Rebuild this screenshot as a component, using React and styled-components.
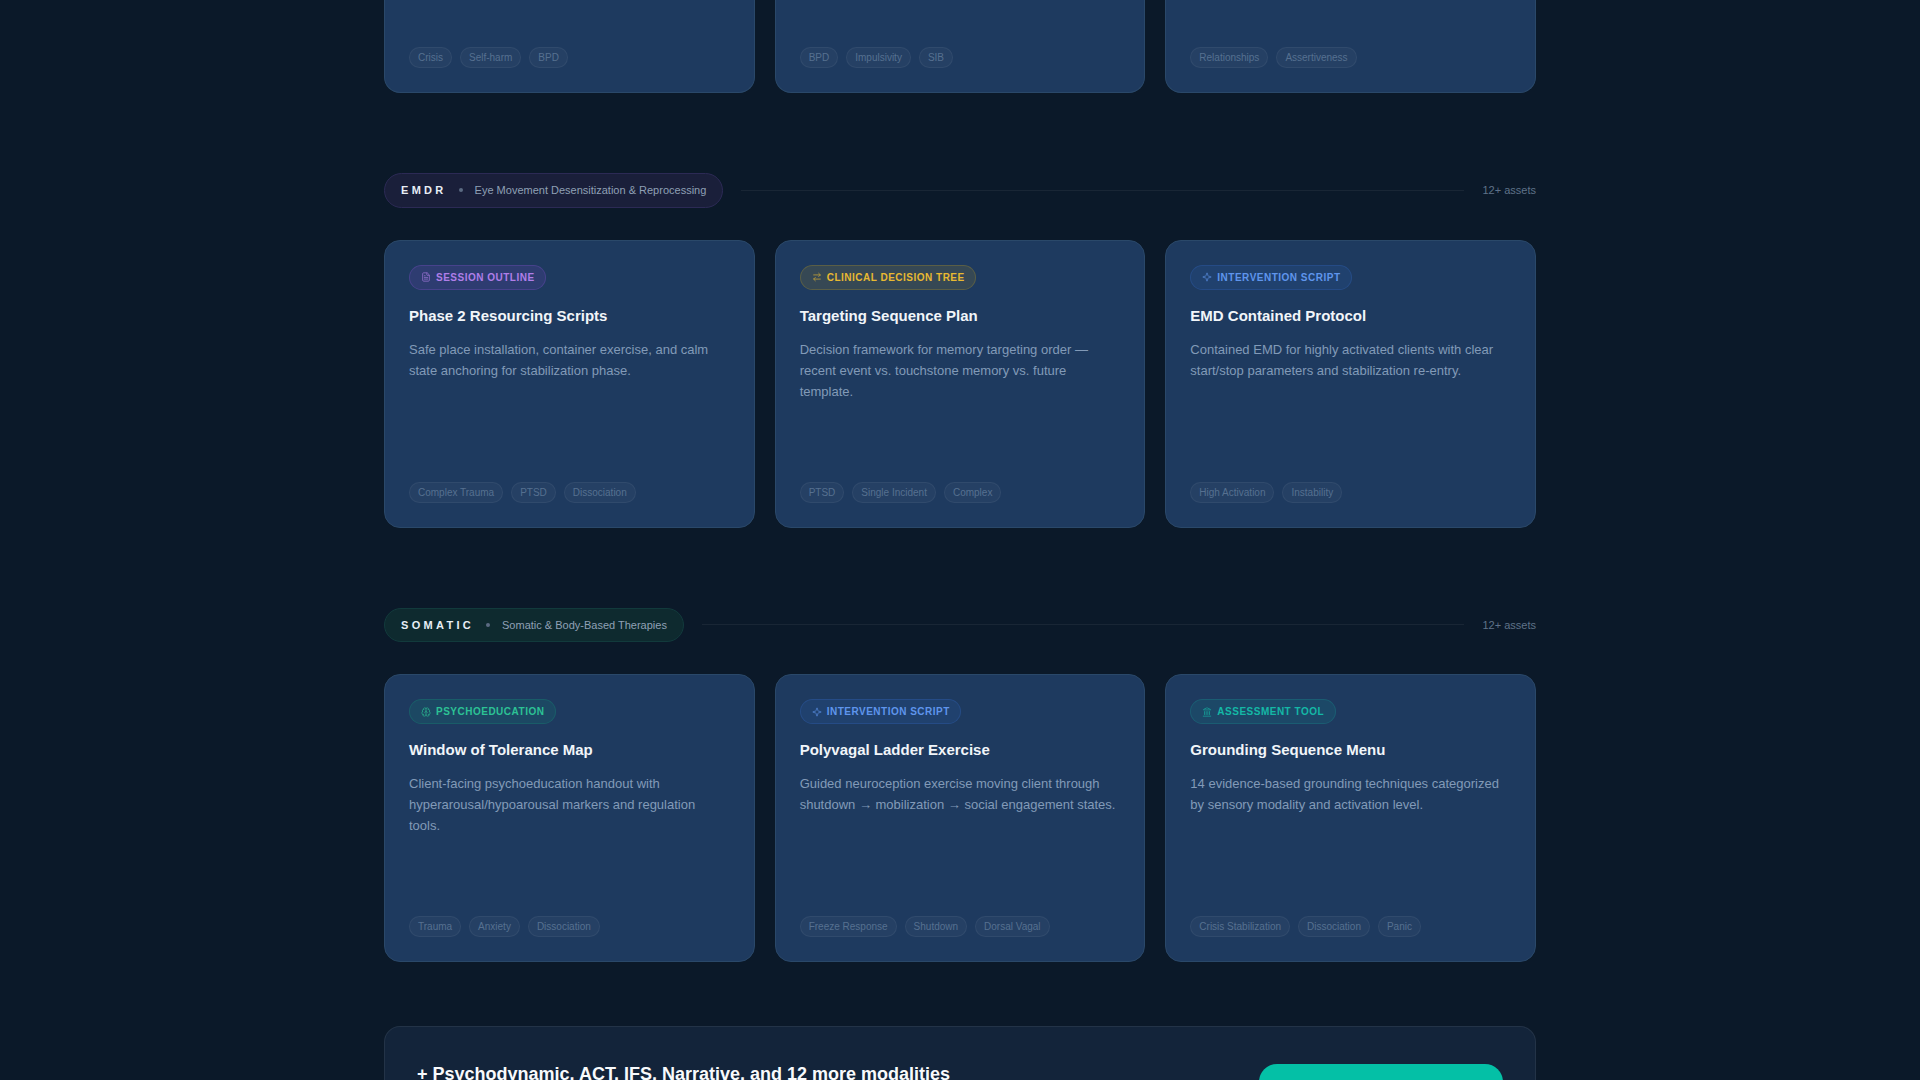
import React from 'react'
import styled, { createGlobalStyle } from 'styled-components'
import { FileText, ArrowRightLeft, Sparkle, Brain, Landmark } from 'lucide-react'

const kinds = {
  outline: { label: 'Session Outline', Icon: FileText, color: '#b07ee8', bg: 'rgba(168, 85, 247, 0.12)', line: 'rgba(168, 85, 247, 0.2)' },
  tree: { label: 'Clinical Decision Tree', Icon: ArrowRightLeft, color: '#e8b931', bg: 'rgba(234, 179, 8, 0.12)', line: 'rgba(234, 179, 8, 0.2)' },
  script: { label: 'Intervention Script', Icon: Sparkle, color: '#5f95ec', bg: 'rgba(59, 130, 246, 0.1)', line: 'rgba(59, 130, 246, 0.18)' },
  psycho: { label: 'Psychoeducation', Icon: Brain, color: '#2cc295', bg: 'rgba(16, 185, 129, 0.12)', line: 'rgba(16, 185, 129, 0.18)' },
  tool: { label: 'Assessment Tool', Icon: Landmark, color: '#14b8a6', bg: 'rgba(20, 184, 166, 0.12)', line: 'rgba(20, 184, 166, 0.18)' },
}

const sections = [
  {
    name: 'EMDR',
    sub: 'Eye Movement Desensitization & Reprocessing',
    tone: 'purple',
    cards: [
      { kind: 'outline', title: 'Phase 2 Resourcing Scripts', text: 'Safe place installation, container exercise, and calm state anchoring for stabilization phase.', tags: ['Complex Trauma', 'PTSD', 'Dissociation'] },
      { kind: 'tree', title: 'Targeting Sequence Plan', text: 'Decision framework for memory targeting order — recent event vs. touchstone memory vs. future template.', tags: ['PTSD', 'Single Incident', 'Complex'] },
      { kind: 'script', title: 'EMD Contained Protocol', text: 'Contained EMD for highly activated clients with clear start/stop parameters and stabilization re-entry.', tags: ['High Activation', 'Instability'] },
    ],
  },
  {
    name: 'SOMATIC',
    sub: 'Somatic & Body-Based Therapies',
    tone: 'teal',
    cards: [
      { kind: 'psycho', title: 'Window of Tolerance Map', text: 'Client-facing psychoeducation handout with hyperarousal/hypoarousal markers and regulation tools.', tags: ['Trauma', 'Anxiety', 'Dissociation'] },
      { kind: 'script', title: 'Polyvagal Ladder Exercise', text: 'Guided neuroception exercise moving client through shutdown → mobilization → social engagement states.', tags: ['Freeze Response', 'Shutdown', 'Dorsal Vagal'] },
      { kind: 'tool', title: 'Grounding Sequence Menu', text: '14 evidence-based grounding techniques categorized by sensory modality and activation level.', tags: ['Crisis Stabilization', 'Dissociation', 'Panic'] },
    ],
  },
]

const topTags = [
  ['Crisis', 'Self-harm', 'BPD'],
  ['BPD', 'Impulsivity', 'SIB'],
  ['Relationships', 'Assertiveness'],
]

const TagRow = ({ tags }) => (
  <Tags>
    {tags.map(tag => (
      <Tag key={tag}>{tag}</Tag>
    ))}
  </Tags>
)

const App = () => {
  return (
    <Page>
      <GlobalStyle />
      <Main>
        <Grid>
          {topTags.map(tags => (
            <CutCard key={tags[0] + tags[1]}>
              <TagRow tags={tags} />
            </CutCard>
          ))}
        </Grid>

        {sections.map(section => (
          <Section key={section.name}>
            <SectionHead>
              <Pill $tone={section.tone}>
                <PillName>{section.name}</PillName>
                <PillDot />
                <PillSub>{section.sub}</PillSub>
              </Pill>
              <HeadLine />
              <Count>12+ assets</Count>
            </SectionHead>
            <Grid>
              {section.cards.map(card => {
                const kind = kinds[card.kind]
                return (
                  <Card key={card.title}>
                    <Badge $kind={kind}>
                      <kind.Icon size={10} strokeWidth={2} />
                      {kind.label}
                    </Badge>
                    <CardTitle>{card.title}</CardTitle>
                    <CardText>{card.text}</CardText>
                    <TagRow tags={card.tags} />
                  </Card>
                )
              })}
            </Grid>
          </Section>
        ))}

        <Banner>
          <BannerTitle>+ Psychodynamic, ACT, IFS, Narrative, and 12 more modalities</BannerTitle>
          <BannerButton type="button" aria-label="See all modalities" />
        </Banner>
      </Main>
    </Page>
  )
}

export default App

const GlobalStyle = createGlobalStyle`
  html, body {
    margin: 0;
    padding: 0;
    background: #0b1929;
  }

  * {
    box-sizing: border-box;
  }
`

const Page = styled.div`
  height: 100vh;
  overflow: hidden;
  background: #0b1929;
  font-family: 'Liberation Sans', Arial, sans-serif;
`

const Main = styled.main`
  width: 1152px;
  margin: 0 auto;
`

const Grid = styled.div`
  display: grid;
  grid-template-columns: repeat(3, 1fr);
  gap: 20px;
`

const Card = styled.article`
  display: flex;
  flex-direction: column;
  align-items: flex-start;
  min-height: 288px;
  padding: 24px;
  background: #1e3a5f;
  border: 1px solid #2a4869;
  border-radius: 16px;
`

const CutCard = styled(Card)`
  min-height: 0;
  height: 93px;
  justify-content: flex-end;
  border-top: 0;
  border-radius: 0 0 16px 16px;
`

const Section = styled.section`
  margin-top: 80px;
`

const SectionHead = styled.div`
  display: flex;
  align-items: center;
  gap: 16px;
  margin-bottom: 32px;
`

const Pill = styled.div`
  display: flex;
  align-items: center;
  gap: 12px;
  height: 34.5px;
  padding: 0 16px;
  border-radius: 18px;
  background: ${p => (p.$tone === 'purple' ? '#1a1f3a' : '#0e2a2f')};
  border: 1px solid ${p => (p.$tone === 'purple' ? '#2c2a55' : '#123a3c')};
`

const PillName = styled.span`
  font-size: 11px;
  font-weight: 700;
  letter-spacing: 3.3px;
  color: #e8eef6;
`

const PillDot = styled.span`
  width: 4px;
  height: 4px;
  border-radius: 50%;
  background: #5b6b82;
`

const PillSub = styled.span`
  font-size: 11px;
  color: #8fa0b5;
`

const HeadLine = styled.div`
  flex: 1;
  height: 1px;
  margin: 0 2px;
  background: rgba(255, 255, 255, 0.06);
`

const Count = styled.span`
  font-size: 11px;
  color: #5f7288;
`

const Badge = styled.div`
  display: inline-flex;
  align-items: center;
  gap: 5px;
  height: 25px;
  padding: 0 10.5px 0 11px;
  border-radius: 13px;
  font-size: 10px;
  font-weight: 700;
  letter-spacing: 0.5px;
  text-transform: uppercase;
  color: ${p => p.$kind.color};
  background: ${p => p.$kind.bg};
  border: 1px solid ${p => p.$kind.line};

  & svg {
    opacity: 0.75;
  }
`

const CardTitle = styled.h3`
  margin: 16px 0 13.4px;
  font-size: 15px;
  line-height: 20px;
  font-weight: 700;
  color: #f1f5f9;
`

const CardText = styled.p`
  margin: 0;
  font-size: 13px;
  line-height: 21px;
  color: #829ab8;
`

const Tags = styled.div`
  display: flex;
  gap: 8px;
  margin-top: auto;
`

const Tag = styled.span`
  display: inline-flex;
  align-items: center;
  height: 21px;
  padding: 0 8px;
  border-radius: 11px;
  font-size: 10px;
  color: #567090;
  background: rgba(255, 255, 255, 0.035);
  border: 1px solid rgba(255, 255, 255, 0.05);
`

const Banner = styled.aside`
  display: flex;
  justify-content: space-between;
  align-items: flex-start;
  margin-top: 64px;
  padding: 36px 32px;
  background: #13243a;
  border: 1px solid rgba(255, 255, 255, 0.07);
  border-radius: 16px;
`

const BannerTitle = styled.h2`
  margin: 0;
  font-size: 18px;
  line-height: 22px;
  font-weight: 700;
  color: #f8fafc;
`

const BannerButton = styled.button`
  width: 244px;
  height: 52px;
  margin-top: 1px;
  border: 0;
  border-radius: 18px;
  background: #04c0a6;
`
